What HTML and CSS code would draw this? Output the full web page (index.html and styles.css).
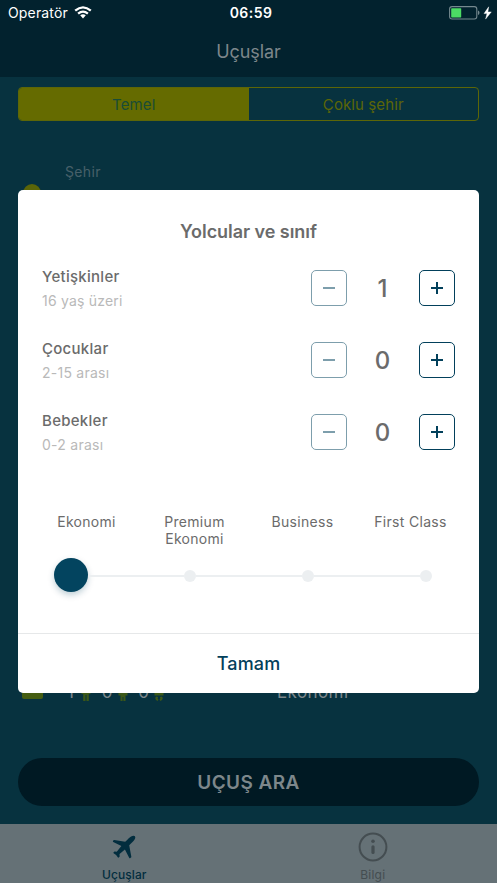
FILE: index.html
```html
<!DOCTYPE html>
<html lang="tr">
<head>
<meta charset="utf-8">
<title>Uçuşlar</title>
<link rel="stylesheet" href="styles.css">
</head>
<body>
<div class="app">
  <header class="header">
    <div class="status">
      <div class="carrier"><span>Operatör</span>
        <svg class="wifi" width="18" height="13" viewBox="0 0 18 13" fill="none" stroke="#fff" stroke-width="2.3"><path d="M1.2 4.7Q9-2 16.8 4.7M4.1 7.7Q9 3.5 13.9 7.7"/><path d="M6.2 9.3Q9 7.2 11.8 9.3L9 12.4Z" fill="#fff" stroke="none"/></svg>
      </div>
      <span class="time">06:59</span>
      <svg class="battery" width="43" height="14" viewBox="0 0 43 14"><rect x=".6" y=".6" width="27.2" height="12.4" rx="2.5" fill="none" stroke="#75898f" stroke-width="1.1"/><rect x="2.2" y="2.2" width="10" height="9.2" rx=".6" fill="#4cdc64"/><path d="M29 4.500q1.500.4 1.500 2.300T29 9.100z" fill="#75898f"/><path d="M39.700.8L35 7.600h3l-1.400 5.500 5.700-7.200h-3.400z" fill="#fff" stroke="#fff" stroke-width=".4"/></svg>
    </div>
    <h1 class="title">Uçuşlar</h1>
  </header>
  <main class="search">
    <div class="segments"><div class="segment active">Temel</div><div class="segment">Çoklu şehir</div></div>
    <div class="city"><span class="city-dot"></span><span class="city-label">Şehir</span></div>
    <div class="summary">
      <span class="seat"></span>
      <div class="counts">
        <span>1</span><svg width="10" height="18" viewBox="0 0 10 18"><path d="M.5 6h9v5H7.800v7H5.500v-6h-1v6H2.200v-7H.5z"/></svg>
        <span>0</span><svg width="10" height="18" viewBox="0 0 10 18"><path d="M.5 8h9v4.500H7.500V18H5.400v-4h-.8v4H2.500v-5.500h-2z"/></svg>
        <span>0</span><svg width="10" height="18" viewBox="0 0 10 18"><path d="M.5 9h9v3.500h-9zM2 13.500q-2 2.500 1.500 4.500l1-1.300q-1.500-1.200-.4-2.700zM8 13.500q2 2.500-1.500 4.500l-1-1.300q1.500-1.200.4-2.700z"/></svg>
      </div>
      <span class="class-name">Ekonomi</span>
    </div>
    <div class="search-button">UÇUŞ ARA</div>
  </main>
  <nav class="tabs">
    <div class="tab current">
      <svg width="26" height="28" viewBox="0 0 28 28" fill="#022d3e"><path d="M25.800 2.300q1 1.300-.4 3.700-1 1.700-5.800 6.200l2.300 12.200q.1.600-.4 1l-1 .7q-.5.200-.8-.3L15 16.600l-5.500 4.800q-.5.500-.3 1l.1 1.800q0 .4-.4.700l-.7.500q-.4.200-.7-.2l-2-2.600-2.700-2q-.5-.4-.1-.8l.7-.8q.3-.3.800-.2l2 .2 5-6-8.800-4.300q-.6-.3-.3-.9l.5-1q.3-.5.900-.4l11.800 2q4.500-4.800 6.300-5.800 2.800-1.300 4.200-.3z"/></svg>
      <span>Uçuşlar</span>
    </div>
    <div class="tab">
      <svg width="30" height="30" viewBox="0 0 30 30"><circle cx="15" cy="15" r="13.400" fill="none" stroke="#444d51" stroke-width="2"/><circle cx="15" cy="9.200" r="1.800" fill="#444d51"/><path d="M15 14.800v5.700" stroke="#444d51" stroke-width="3.200" stroke-linecap="round"/></svg>
      <span>Bilgi</span>
    </div>
  </nav>
</div>
<section class="modal">
  <h2 class="modal-title">Yolcular ve sınıf</h2>
  <div class="passengers">
    <div class="row"><div class="who"><b>Yetişkinler</b><span class="age">16 yaş üzeri</span></div><div class="stepper"><i class="box minus"></i><span>1</span><i class="box plus"></i></div></div>
    <div class="row"><div class="who"><b>Çocuklar</b><span>2-15 arası</span></div><div class="stepper"><i class="box minus"></i><span>0</span><i class="box plus"></i></div></div>
    <div class="row"><div class="who"><b>Bebekler</b><span>0-2 arası</span></div><div class="stepper"><i class="box minus"></i><span>0</span><i class="box plus"></i></div></div>
  </div>
  <div class="classes"><span>Ekonomi</span><span>Premium<br>Ekonomi</span><span>Business</span><span>First Class</span></div>
  <div class="slider"><i class="thumb"></i><i class="track"></i><i class="stop"></i><i class="track"></i><i class="stop"></i><i class="track"></i><i class="stop"></i></div>
  <div class="done">Tamam</div>
</section>
</body>
</html>
```
FILE: styles.css
```css
* { box-sizing: border-box; }
body { margin: 0; font-family: Inter, "Liberation Sans", sans-serif; background: #07323f; }
h1, h2 { margin: 0; }
i { font-style: normal; }
svg { display: block; flex: none; }
.app { width: 497px; height: 883px; display: flex; flex-direction: column; overflow: hidden; }
.header { height: 77px; flex: none; background: #02222e; }
.status { height: 26px; display: grid; grid-template-columns: 1fr auto 1fr; align-items: center; padding: 0 5px 1px 8px; color: #fff; font-size: 14px; }
.carrier { display: flex; align-items: center; gap: 6px; letter-spacing: .15px; }
.time { font-weight: 600; letter-spacing: .45px; padding-left: 2px; }
.battery { justify-self: end; }
.title { text-align: center; font-size: 18px; line-height: 24px; padding-top: 14px; font-weight: 400; color: #7d878b; letter-spacing: -.1px; }
.search { flex: 1; display: flex; flex-direction: column; padding: 10px 18px 18px; }
.segments { height: 34px; flex: none; display: flex; border: 1px solid #5c6607; border-radius: 4px; overflow: hidden; }
.segment { flex: 1; display: flex; align-items: center; justify-content: center; font-size: 15px; color: #5c6607; letter-spacing: .1px; }
.segment.active { background: #656b00; color: #194c36; }
.city { display: flex; margin-top: 41px; height: 41px; }
.city-dot { width: 18px; height: 18px; margin: 22px 0 0 5px; border-radius: 50%; background: #5a6508; }
.city-label { margin-left: 24px; font-size: 14px; line-height: 20px; color: #476069; letter-spacing: .35px; }
.summary { margin-top: 477px; height: 24px; flex: none; display: flex; align-items: center; color: #7d878b; font-size: 17px; }
.seat { width: 21px; height: 16px; margin: 0 22px 2px 4px; border-radius: 2px; background: #455d12; }
.counts { width: 212px; display: flex; align-items: center; gap: 5px; }
.counts span { width: 11px; text-align: center; }
.counts span + svg { margin-right: 5.500px; }
.counts svg { fill: #3c5818; }
.class-name { letter-spacing: .4px; }
.search-button { margin-top: auto; height: 48px; flex: none; display: flex; align-items: center; justify-content: center; border-radius: 24px; background: #001923; color: #7d878b; font-size: 19px; font-weight: 600; letter-spacing: .4px; }
.tabs { height: 59px; flex: none; display: flex; background: #657176; }
.tab { flex: 1; display: flex; flex-direction: column; align-items: center; height: 59px; padding-top: 8px; font-size: 12px; color: #444d51; letter-spacing: .25px; }
.tab span { line-height: 16px; margin-top: 5px; }
.tab.current { color: #022d3e; padding-top: 9px; font-weight: 500; letter-spacing: .1px; }
.tab.current span { margin-top: 6px; }
.modal { position: absolute; left: 18px; top: 190px; width: 461px; height: 503px; border-radius: 5px; background: #fff; display: flex; flex-direction: column; overflow: hidden; color: #6b6b6b; }
.modal-title { padding-top: 30px; text-align: center; font-size: 18px; line-height: 24px; font-weight: 600; letter-spacing: -.05px; }
.passengers { padding: 8px 24px 0; }
.row { height: 72px; display: flex; justify-content: space-between; align-items: center; }
.who { display: flex; flex-direction: column; }
.who b { font-weight: 500; font-size: 15px; line-height: 24px; letter-spacing: .28px; margin-top: 2px; }
.who span { font-size: 14px; line-height: 24px; color: #b9b9b9; letter-spacing: .25px; }
.who .age { letter-spacing: .2px; }
.stepper { display: flex; align-items: center; }
.stepper span { width: 71px; margin-right: 1px; text-align: center; font-size: 24px; font-weight: 500; }
.box { width: 36px; height: 36px; border: 1px solid #02405b; border-radius: 5px; display: grid; place-items: center; color: #02405b; }
.minus { border-color: #7d9eac; color: #7d9eac; }
.box::before, .plus::after { content: ""; grid-area: 1 / 1; width: 12px; height: 2px; background: currentColor; }
.plus::after { width: 2px; height: 12px; }
.classes { display: grid; grid-template-columns: repeat(4, 108px); margin: 45px 0 0 14.500px; text-align: center; font-size: 14px; line-height: 17px; letter-spacing: .3px; height: 34px; }
.slider { height: 34px; display: flex; align-items: center; margin: 11px 48px 0 36px; }
.thumb { width: 34px; height: 34px; flex: none; border-radius: 50%; background: #03445f; box-shadow: 0 3px 6px #03445f40; }
.track { flex: 96px 0 0; height: 2px; margin-top: 1px; background: #eceff1; }
.track ~ .track { flex-basis: 106px; }
.stop { width: 12px; height: 12px; margin-top: 1px; flex: none; border-radius: 50%; background: #eceff1; }
.done { margin-top: auto; height: 60px; flex: none; border-top: 1px solid #e6e8e9; display: flex; align-items: center; justify-content: center; color: #02405b; font-size: 18px; font-weight: 500; letter-spacing: .15px; }
```
